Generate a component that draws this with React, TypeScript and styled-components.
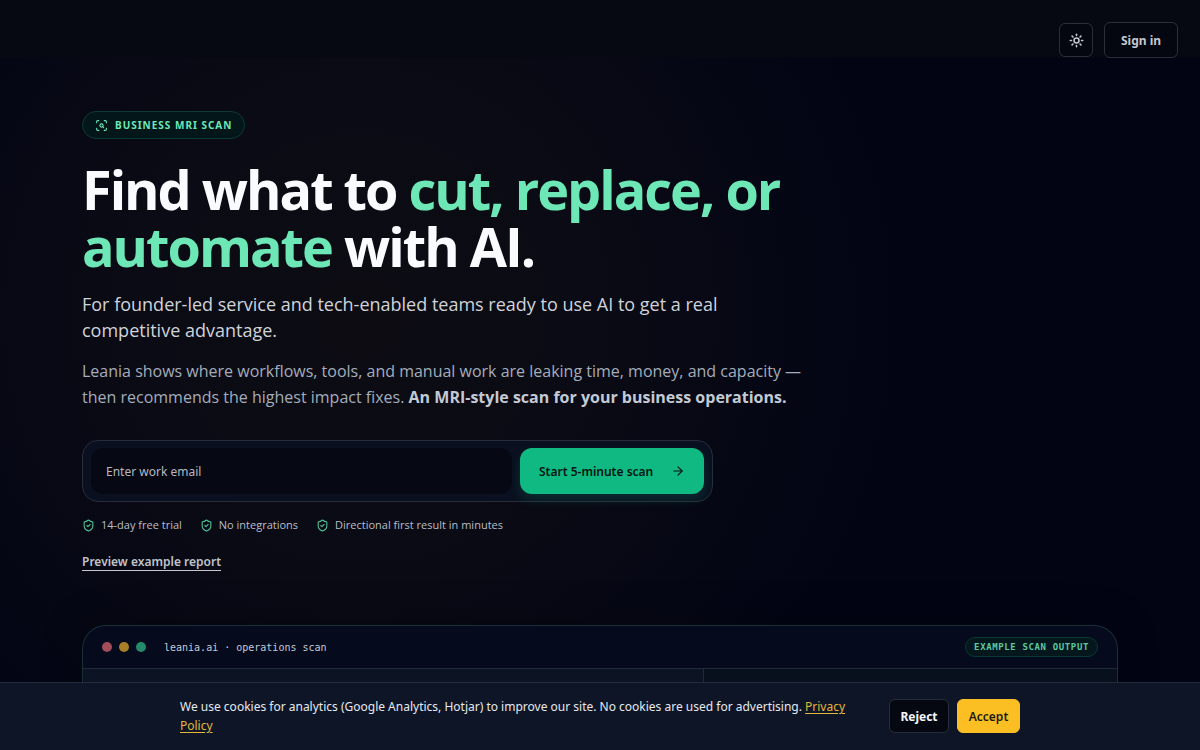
import React from 'react';
import styled, { createGlobalStyle } from 'styled-components';
import { ArrowRight, ScanSearch, ShieldCheck, Sun } from 'lucide-react';

const sans = `'Open Sans', 'Noto Sans', sans-serif`;
const uiSans = `'Noto Sans', 'Open Sans', sans-serif`;
const mono = `'DejaVu Sans Mono', 'Liberation Mono', monospace`;

const GlobalStyle = createGlobalStyle`
  *, *::before, *::after { box-sizing: border-box; }
  body {
    margin: 0;
    background: #020414;
    color: #cbd5e1;
    font-family: ${sans};
  }
  button, input { font-family: ${uiSans}; }
`;

const Page = styled.div`
  display: flex;
  flex-direction: column;
  min-height: 100vh;
  background:
    radial-gradient(circle at 30% 42%, #0d0c13 0%, #0a0b14 24%, rgba(2, 4, 20, 0) 58%),
    #020414;
`;

const Header = styled.header`
  display: flex;
  align-items: center;
  justify-content: flex-end;
  gap: 11px;
  height: 58px;
  padding: 22px 22px 0;
  background: #060912;
`;

const HeaderButton = styled.button<{ $square?: boolean }>`
  display: inline-flex;
  align-items: center;
  justify-content: center;
  width: ${(p) => (p.$square ? '34px' : '74px')};
  height: ${(p) => (p.$square ? '34px' : '36px')};
  padding: 0;
  border: 1px solid #2a303b;
  border-radius: 6px;
  background: #04070f;
  color: #c3c8d0;
  font-size: 12px;
  font-weight: 700;
`;

const Main = styled.main`
  display: flex;
  flex: 1;
  flex-direction: column;
  align-items: flex-start;
  width: 100%;
  max-width: 1200px;
  margin: 0 auto;
  padding: 53px 82px 0;
`;

const Eyebrow = styled.div`
  display: flex;
  align-items: center;
  gap: 7px;
  height: 28px;
  padding: 0 12px;
  border: 1px solid #0c3b35;
  border-radius: 14px;
  background: #031619;
  color: #6ee7b7;
  font-family: ${uiSans};
  font-size: 10px;
  font-weight: 700;
  letter-spacing: 1px;
  text-transform: uppercase;
`;

const Title = styled.h1`
  max-width: 740px;
  margin: 22px 0 0;
  color: #fafbff;
  font-size: 54px;
  font-weight: 700;
  line-height: 57px;
  letter-spacing: -2px;
`;

const Accent = styled.span`
  color: #6ee7b7;
`;

const Lead = styled.p`
  max-width: 660px;
  margin: 16px 0 0;
  color: #d0d3da;
  font-size: 18px;
  line-height: 26px;
`;

const Body = styled.p`
  max-width: 740px;
  margin: 15px 0 0;
  color: #a4adbb;
  font-size: 16px;
  line-height: 26px;

  strong {
    color: #c3cad6;
    font-weight: 700;
  }
`;

const ScanForm = styled.form`
  display: flex;
  gap: 8px;
  width: 100%;
  max-width: 631px;
  margin: 30px 0 0;
  padding: 7px 8px;
  border: 1px solid #272d3b;
  border-radius: 16px;
  background: #0a1020;
`;

const EmailInput = styled.input`
  flex: 1;
  min-width: 0;
  height: 46px;
  padding: 0 15px;
  border: 0;
  border-radius: 12px;
  background: #060913;
  color: #c2c5cc;
  font-size: 12px;

  &::placeholder {
    color: #b4b8c1;
    opacity: 1;
  }
`;

const ScanButton = styled.button`
  display: flex;
  align-items: center;
  justify-content: space-between;
  width: 184px;
  height: 46px;
  padding: 0 19px;
  border: 0;
  border-radius: 12px;
  background: #10b981;
  box-shadow: 0 6px 12px rgba(16, 185, 129, 0.16);
  color: #04150f;
  font-size: 12px;
  font-weight: 600;
`;

const Perks = styled.ul`
  display: flex;
  flex-wrap: wrap;
  gap: 18px;
  margin: 15px 0 0;
  padding: 0;
  list-style: none;
`;

const Perk = styled.li`
  display: flex;
  align-items: center;
  gap: 6px;
  color: #b9bec8;
  font-size: 11px;
  line-height: 16px;

  svg { color: #4fc59b; }
`;

const PreviewLink = styled.a`
  margin: 20px 0 0;
  border-bottom: 1px solid #c4c7cd;
  color: #c0c3ca;
  font-family: ${uiSans};
  font-size: 12px;
  font-weight: 600;
  line-height: 17px;
  text-decoration: none;
`;

const Report = styled.section`
  display: flex;
  flex: 1;
  flex-direction: column;
  width: 100%;
  margin: 54px 0 0;
  border: 1px solid #17303a;
  border-bottom: 0;
  border-radius: 24px 24px 0 0;
  background: #050a1c;
  box-shadow: 0 0 40px rgba(0, 0, 0, 0.3);
  overflow: hidden;
`;

const ReportBar = styled.div`
  display: flex;
  align-items: center;
  height: 43px;
  padding: 0 19px;
  border-bottom: 1px solid #1f2b39;
`;

const Dots = styled.div`
  display: flex;
  gap: 7px;
  margin-right: 18px;
`;

const Dot = styled.span<{ $color: string }>`
  width: 10px;
  height: 10px;
  border-radius: 50%;
  background: ${(p) => p.$color};
`;

const ReportName = styled.span`
  flex: 1;
  color: #c6cbd6;
  font-family: ${mono};
  font-size: 10px;
`;

const ReportTag = styled.span`
  padding: 0 8px;
  border: 1px solid #0b3934;
  border-radius: 10px;
  background: #03171c;
  color: #5ec7a2;
  font-family: ${mono};
  font-size: 9px;
  font-weight: 700;
  line-height: 18px;
  letter-spacing: 0.07em;
  text-transform: uppercase;
`;

const ReportColumns = styled.div`
  display: grid;
  flex: 1;
  grid-template-columns: 3fr 2fr;
`;

const ReportColumn = styled.div<{ $dim?: boolean }>`
  border-left: ${(p) => (p.$dim ? '1px solid #1f2b39' : '0')};
  background: ${(p) => (p.$dim ? '#08101e' : '#0c1423')};
`;

const CookieBar = styled.aside`
  position: fixed;
  right: 0;
  bottom: 0;
  left: 0;
  padding: 14px 24px 15px;
  border-top: 1px solid #232e3d;
  background: #0e1526;
`;

const CookieInner = styled.div`
  display: flex;
  align-items: center;
  gap: 20px;
  max-width: 840px;
  margin: 0 auto;
`;

const CookieText = styled.p`
  flex: 1;
  margin: 0;
  color: #e6e9ef;
  font-family: ${uiSans};
  font-size: 12px;
  line-height: 19px;

  a {
    color: #e2b73a;
    text-underline-offset: 2px;
  }
`;

const CookieActions = styled.div`
  display: flex;
  gap: 8px;
`;

const CookieButton = styled.button<{ $primary?: boolean }>`
  width: ${(p) => (p.$primary ? '63px' : '60px')};
  height: 34px;
  padding: 0;
  border: 1px solid ${(p) => (p.$primary ? '#fbbf24' : '#262d3a')};
  border-radius: 6px;
  background: ${(p) => (p.$primary ? '#fbbf24' : '#050811')};
  color: ${(p) => (p.$primary ? '#1d1a12' : '#f4f6fa')};
  font-size: 12px;
  font-weight: ${(p) => (p.$primary ? 600 : 700)};
`;

const perks = ['14-day free trial', 'No integrations', 'Directional first result in minutes'];

export default function App() {
  return (
    <Page>
      <GlobalStyle />
      <Header>
        <HeaderButton $square type="button" aria-label="Toggle theme">
          <Sun size={15} strokeWidth={2.5} />
        </HeaderButton>
        <HeaderButton type="button">Sign in</HeaderButton>
      </Header>
      <Main>
        <Eyebrow>
          <ScanSearch size={13} />
          Business MRI scan
        </Eyebrow>
        <Title>
          Find what to <Accent>cut, replace, or automate</Accent> with AI.
        </Title>
        <Lead>
          For founder-led service and tech-enabled teams ready to use AI to get a real competitive advantage.
        </Lead>
        <Body>
          Leania shows where workflows, tools, and manual work are leaking time, money, and capacity — then
          recommends the highest impact fixes. <strong>An MRI-style scan for your business operations.</strong>
        </Body>
        <ScanForm onSubmit={(e) => e.preventDefault()}>
          <EmailInput type="email" placeholder="Enter work email" aria-label="Work email" />
          <ScanButton type="submit">
            Start 5-minute scan
            <ArrowRight size={14} />
          </ScanButton>
        </ScanForm>
        <Perks>
          {perks.map((perk) => (
            <Perk key={perk}>
              <ShieldCheck size={13} />
              {perk}
            </Perk>
          ))}
        </Perks>
        <PreviewLink href="#report">Preview example report</PreviewLink>
        <Report id="report">
          <ReportBar>
            <Dots>
              <Dot $color="#a24c5c" />
              <Dot $color="#a97f27" />
              <Dot $color="#258a6c" />
            </Dots>
            <ReportName>leania.ai · operations scan</ReportName>
            <ReportTag>Example scan output</ReportTag>
          </ReportBar>
          <ReportColumns>
            <ReportColumn />
            <ReportColumn $dim />
          </ReportColumns>
        </Report>
      </Main>
      <CookieBar aria-label="Cookie notice">
        <CookieInner>
          <CookieText>
            We use cookies for analytics (Google Analytics, Hotjar) to improve our site. No cookies are used for
            advertising. <a href="#privacy">Privacy Policy</a>
          </CookieText>
          <CookieActions>
            <CookieButton type="button">Reject</CookieButton>
            <CookieButton $primary type="button">Accept</CookieButton>
          </CookieActions>
        </CookieInner>
      </CookieBar>
    </Page>
  );
}
